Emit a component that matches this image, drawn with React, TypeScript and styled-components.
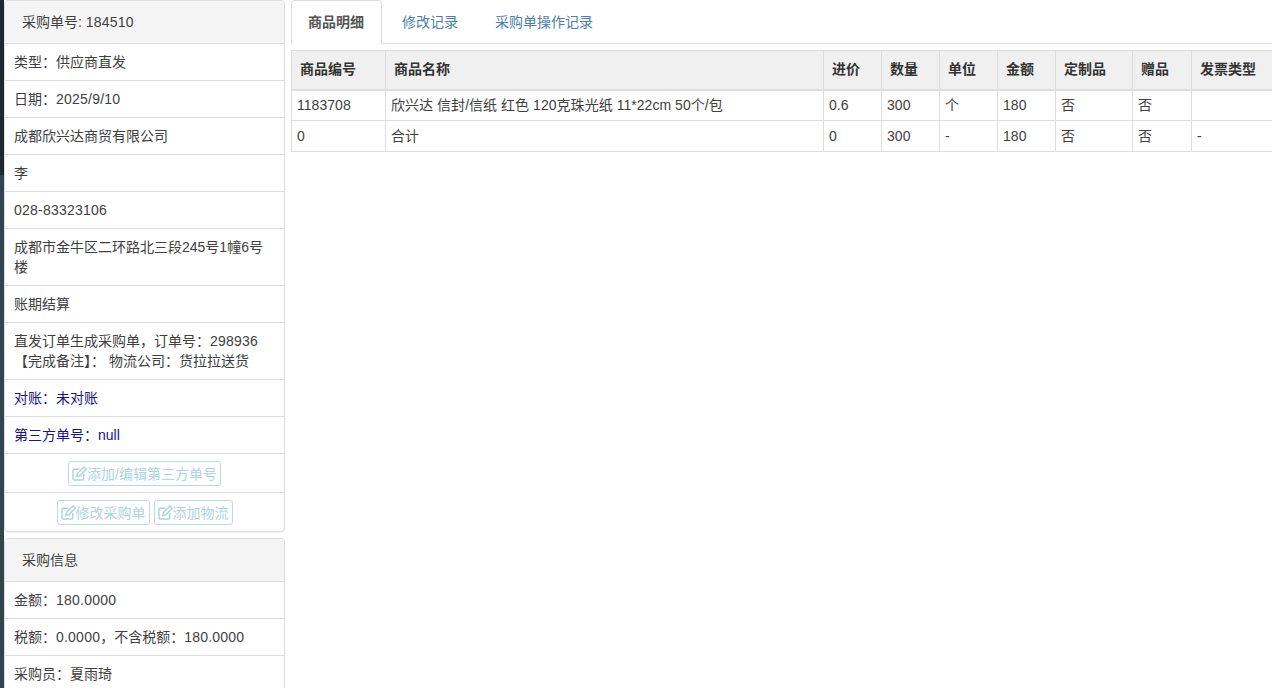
import React from "react";
import styled, { createGlobalStyle } from "styled-components";

const Global = createGlobalStyle`
  html, body { margin: 0; padding: 0; background: #fff; height: 688px; overflow: hidden; }
  * { box-sizing: border-box; }
  body {
    font-family: "Liberation Sans", "Noto Sans CJK SC", sans-serif;
    font-size: 14px;
    line-height: 20px;
    color: #404040;
  }
`;

const Page = styled.div`
  display: flex;
  width: 1272px;
  height: 688px;
  overflow: hidden;
  background: #fff;
`;

const Rail = styled.div`
  width: 4px;
  flex: none;
  background: linear-gradient(#20282f 0, #20282f 175px, #34444f 175px, #34444f 100%);
`;

const Side = styled.aside`
  width: 281px;
  flex: none;
  display: flex;
  flex-direction: column;
  gap: 6px;
`;

const Panel = styled.section`
  border: 1px solid #ddd;
  border-radius: 4px;
  background: #fff;
  flex: none;
  box-shadow: 0 1px 1px rgba(0, 0, 0, 0.05);
`;

const PanelHead = styled.div`
  height: 42px;
  padding: 11px 17px 0;
  background: #f5f5f5;
  border-radius: 3px 3px 0 0;
`;

const Row = styled.div<{ $blue?: boolean }>`
  border-top: 1px solid #ddd;
  padding: 8px 9px;
  color: ${(p) => (p.$blue ? "#14148c" : "#404040")};
`;

const Num = styled.span`
  letter-spacing: 0.22px;
`;

const ButtonRow = styled.div`
  border-top: 1px solid #ddd;
  height: 39px;
  padding-top: 7px;
  display: flex;
  justify-content: center;
  gap: 4px;
`;

const ActionButton = styled.span`
  display: inline-flex;
  align-items: center;
  height: 25px;
  padding: 0 3px;
  border: 1px solid #bcd9e2;
  border-radius: 3px;
  color: #aed4e0;
  background: #fff;
  white-space: nowrap;
`;

const Main = styled.main`
  flex: 1;
  min-width: 0;
  padding-left: 6px;
`;

const Tabs = styled.nav`
  display: flex;
  height: 44px;
  border-bottom: 1px solid #ddd;
`;

const Tab = styled.a<{ $active?: boolean }>`
  display: block;
  height: ${(p) => (p.$active ? "44px" : "43px")};
  padding: 11px ${(p) => (p.$active ? "17px" : "16px")} 0 16px;
  margin-right: 3px;
  border: 1px solid ${(p) => (p.$active ? "#ddd" : "transparent")};
  border-bottom-color: ${(p) => (p.$active ? "#fff" : "transparent")};
  border-radius: 4px 4px 0 0;
  background: #fff;
  color: ${(p) => (p.$active ? "#555" : "#4a7fab")};
  font-weight: ${(p) => (p.$active ? 700 : 400)};
`;

const Table = styled.table`
  margin-top: 6px;
  width: 981px;
  table-layout: fixed;
  border-collapse: collapse;
`;

const Th = styled.th<{ $w: number }>`
  width: ${(p) => p.$w}px;
  height: 39px;
  padding: 0 8px 2px;
  background: #f0f0f0;
  border: 1px solid #ddd;
  border-bottom-width: 2px;
  text-align: left;
  font-weight: 700;
  color: #333;
  white-space: nowrap;
`;

const Td = styled.td`
  height: 31px;
  padding: 0 5px;
  border: 1px solid #ddd;
  white-space: nowrap;
  overflow: hidden;
  letter-spacing: 0.04px;
  color: #404040;
`;

const Edit = () => (
  <svg width="15" height="15" viewBox="0 0 16 16" fill="none" stroke="currentColor" strokeWidth="1.5">
    <path d="M12.5 8.5V13.5a1.5 1.5 0 0 1-1.5 1.5H2.5A1.5 1.5 0 0 1 1 13.5V5a1.5 1.5 0 0 1 1.5-1.5H8" />
    <path d="M5 11.2l.8-3.2L12.8 1l2.4 2.4-7 7z" />
  </svg>
);

const columns: [string, number][] = [
  ["商品编号", 94],
  ["商品名称", 438],
  ["进价", 58],
  ["数量", 58],
  ["单位", 58],
  ["金额", 58],
  ["定制品", 77],
  ["赠品", 59],
  ["发票类型", 81],
];

const rows = [
  ["1183708", "欣兴达 信封/信纸 红色 120克珠光纸 11*22cm 50个/包", "0.6", "300", "个", "180", "否", "否", ""],
  ["0", "合计", "0", "300", "-", "180", "否", "否", "-"],
];

export default function App() {
  return (
    <Page>
      <Global />
      <Rail />
      <Side>
        <Panel>
          <PanelHead>采购单号: <Num>184510</Num></PanelHead>
          <Row>类型：供应商直发</Row>
          <Row>日期：<Num>2025/9/10</Num></Row>
          <Row>成都欣兴达商贸有限公司</Row>
          <Row>李</Row>
          <Row><Num>028-83323106</Num></Row>
          <Row>成都市金牛区二环路北三段245号1幢6号楼</Row>
          <Row>账期结算</Row>
          <Row>直发订单生成采购单，订单号：<Num>298936</Num> 【完成备注】： 物流公司：货拉拉送货</Row>
          <Row $blue>对账：未对账</Row>
          <Row $blue>第三方单号：null</Row>
          <ButtonRow>
            <ActionButton><Edit />添加/编辑第三方单号</ActionButton>
          </ButtonRow>
          <ButtonRow>
            <ActionButton><Edit />修改采购单</ActionButton>
            <ActionButton><Edit />添加物流</ActionButton>
          </ButtonRow>
        </Panel>
        <Panel>
          <PanelHead>采购信息</PanelHead>
          <Row>金额：<Num>180.0000</Num></Row>
          <Row>税额：<Num>0.0000</Num>，不含税额：<Num>180.0000</Num></Row>
          <Row>采购员：夏雨琦</Row>
        </Panel>
      </Side>
      <Main>
        <Tabs>
          <Tab $active>商品明细</Tab>
          <Tab>修改记录</Tab>
          <Tab>采购单操作记录</Tab>
        </Tabs>
        <Table>
          <thead>
            <tr>
              {columns.map(([label, w]) => (
                <Th key={label} $w={w}>{label}</Th>
              ))}
            </tr>
          </thead>
          <tbody>
            {rows.map((r) => (
              <tr key={r[0]}>
                {r.map((c, i) => (
                  <Td key={i}>{c}</Td>
                ))}
              </tr>
            ))}
          </tbody>
        </Table>
      </Main>
    </Page>
  );
}
